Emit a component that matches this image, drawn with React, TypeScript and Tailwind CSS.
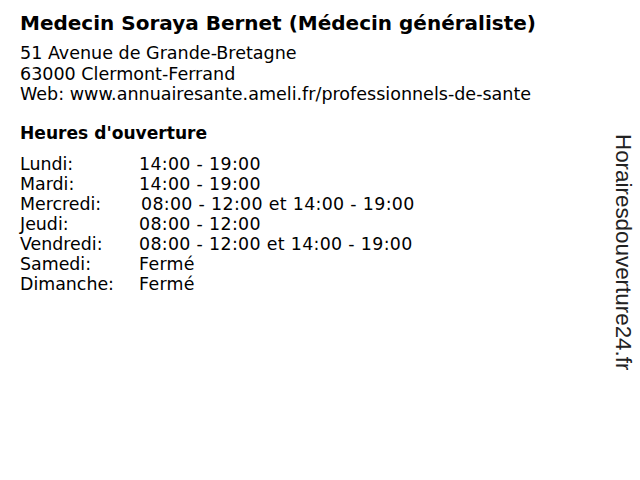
export default function App() {
  const hours = [
    ["Lundi:", "14:00 - 19:00", ""],
    ["Mardi:", "14:00 - 19:00", ""],
    ["Mercredi:", "08:00 - 12:00 et 14:00 - 19:00", "pl-[2px]"],
    ["Jeudi:", "08:00 - 12:00", ""],
    ["Vendredi:", "08:00 - 12:00 et 14:00 - 19:00", ""],
    ["Samedi:", "Fermé", ""],
    ["Dimanche:", "Fermé", ""],
  ];

  return (
    <div className="relative h-[480px] w-[640px] bg-white text-black font-['DejaVu_Sans',sans-serif]">
      <div className="px-5 pt-[10px]">
        <h1 className="text-[20px] font-bold leading-[26px]">
          Medecin Soraya Bernet (Médecin généraliste)
        </h1>
        <div className="mt-[7px] text-[17.55px] leading-[20.5px]">
          <p>51 Avenue de Grande-Bretagne</p>
          <p>63000 Clermont-Ferrand</p>
          <p>Web: www.annuairesante.ameli.fr/professionnels-de-sante</p>
        </div>

        <h2 className="mt-[18.5px] text-[17.1px] font-bold leading-[20px]">Heures d'ouverture</h2>
        <div className="mt-[11px] grid grid-cols-[119px_1fr] text-[17.4px] leading-[20px]">
          {hours.map(([day, time, pad]) => (
            <div key={day} className="contents">
              <span>{day}</span>
              <span className={`whitespace-pre tracking-[0.33px] ${pad}`}>{time}</span>
            </div>
          ))}
        </div>
      </div>

      {/* site watermark down the right edge */}
      <div className="absolute right-[5px] top-[134px] text-[22.4px] leading-[24px] text-[#222] font-['Liberation_Sans',Arial,sans-serif] [writing-mode:vertical-rl]">
        Horairesdouverture24.fr
      </div>
    </div>
  );
}
